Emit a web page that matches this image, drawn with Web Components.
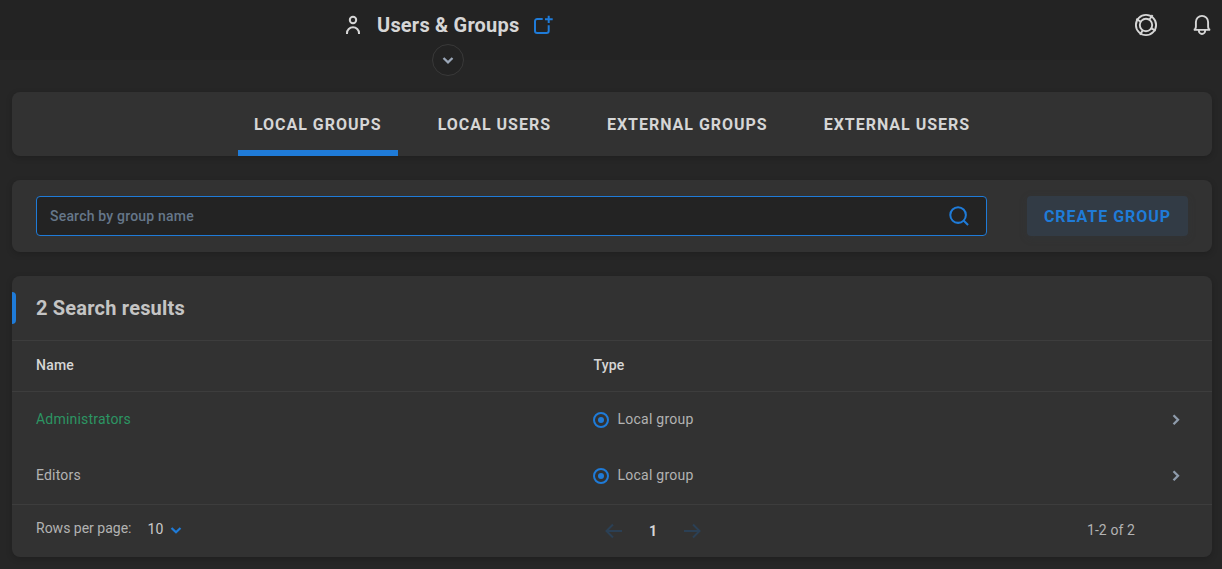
<!DOCTYPE html>
<html lang="en">
<head>
<meta charset="utf-8">
<title>Users &amp; Groups</title>
<style>
  html {
    height: 100%;
    background: #262626;
  }
  body {
    margin: 0;
    height: 100%;
    overflow: hidden;
    font-family: Roboto, "Liberation Sans", sans-serif;
    font-size: 14px;
    line-height: 20px;
    color: #b3b3b3;
    --primary: #1f7bd8;
    --surface: #323232;
    --line: #3d3d3d;
    --muted: #8e9bab;
    --bright: #d6d6d6;
  }
</style>
</head>
<body>
<users-page></users-page>

<script>
const icons = {
  user: '<circle cx="12" cy="7" r="3.2"/><path d="M6 21v-.7a6 6 0 0 1 12 0v.7"/>',
  add: '<path d="M11.700 6H6.200A2.200 2.200 0 0 0 4 8.200v9.600A2.200 2.200 0 0 0 6.200 20h9.300a2.200 2.200 0 0 0 2.200-2.200V12.300M17.700 2.700v7.300M14 6.300h7.700"/>',
  help: '<circle cx="12" cy="12" r="10.100"/><circle cx="12" cy="12" r="6.200"/><path d="M6.700 8.700L2.300 5.900M15.300 6.700l3.300-4.600M17.300 15.300l4.400 2.400M8.700 17.300l-2.600 4.500"/>',
  bell: '<path d="M3.900 16.900c1.500-.5 2-1.700 2-3.400V9a6.100 6.100 0 0 1 12.200 0v4.500c0 1.700.5 2.900 2 3.400zM8.800 17.500a3.200 3.500 0 0 0 6.400 0"/>',
  search: '<circle cx="11" cy="11" r="8.500"/><path d="M16.900 16.900l5 5"/>',
  down: '<path d="M7.500 10l4.500 4.300 4.500-4.300"/>',
  right: '<path d="M9.500 7.200l4.500 4.500-4.500 4.500"/>',
  local: '<circle cx="12" cy="12" r="10.500"/><circle cx="12" cy="12" r="4.500" fill="currentColor" stroke="none"/>',
  prev: '<path d="M20 12H4.500M11 5.500L4.500 12l6.500 6.500"/>',
  next: '<path d="M4 12h15.500M13 5.500l6.500 6.500-6.500 6.500"/>'
};

class UiIcon extends HTMLElement {
  connectedCallback() {
    const size = this.getAttribute('size') || 24;
    const weight = this.getAttribute('weight') || 2;
    this.attachShadow({ mode: 'open' }).innerHTML = `
      <style>
        :host { display: block; flex: none; width: ${size}px; height: ${size}px; }
        svg { display: block; fill: none; stroke: currentColor; }
      </style>
      <svg width="${size}" height="${size}" viewBox="0 0 24 24" stroke-width="${weight}">${icons[this.getAttribute('name')]}</svg>
    `;
  }
}
customElements.define('ui-icon', UiIcon);

// Attaches a fresh copy of the template to the host
function render(host, template) {
  host.attachShadow({ mode: 'open' }).appendChild(template.content.cloneNode(true));
}

const templateHeader = document.createElement('template');
templateHeader.innerHTML = `
  <style>
    :host {
      display: block;
      position: relative;
      height: 60px;
      box-sizing: border-box;
      background: #232323;
      color: var(--bright);
    }
    .bar {
      display: flex;
      align-items: center;
      height: 50px;
    }
    .title {
      display: flex;
      align-items: center;
      padding-left: 341px;
    }
    h1 {
      margin: 0 12px;
      font-size: 20px;
      line-height: 24px;
      font-weight: 700;
      letter-spacing: .2px;
      white-space: nowrap;
    }
    .add {
      color: var(--primary);
    }
    .actions {
      display: flex;
      gap: 32px;
      margin-left: auto;
      padding-right: 8px;
    }
    .expand {
      position: absolute;
      left: 432px;
      top: 44px;
      display: flex;
      align-items: center;
      justify-content: center;
      width: 32px;
      height: 32px;
      box-sizing: border-box;
      padding: 0;
      border: 1px solid #393939;
      border-radius: 50%;
      background: #232323;
      color: #9ba7b8;
    }
  </style>
  <div class="bar">
    <div class="title">
      <ui-icon name="user"></ui-icon>
      <h1>Users &amp; Groups</h1>
      <ui-icon class="add" name="add"></ui-icon>
    </div>
    <div class="actions">
      <ui-icon name="help" weight="1.9"></ui-icon>
      <ui-icon name="bell" weight="1.9"></ui-icon>
    </div>
  </div>
  <button class="expand"><ui-icon name="down" weight="2.3"></ui-icon></button>
`;

class PageHeader extends HTMLElement {
  constructor() {
    super();
    render(this, templateHeader);
  }
}
customElements.define('page-header', PageHeader);

const templateCard = document.createElement('template');
templateCard.innerHTML = `
  <style>
    :host {
      display: block;
      border-radius: 8px;
      background: var(--surface);
      box-shadow: 0 2px 6px rgba(0, 0, 0, .18);
    }
  </style>
  <slot></slot>
`;

class UiCard extends HTMLElement {
  constructor() {
    super();
    render(this, templateCard);
  }
}
customElements.define('ui-card', UiCard);

const templateTab = document.createElement('template');
templateTab.innerHTML = `
  <style>
    :host {
      display: flex;
      align-items: center;
      box-sizing: border-box;
      height: 64px;
      padding: 8px 16px 0;
      border-bottom: 6px solid transparent;
      color: var(--bright);
      font-size: 16px;
      font-weight: 700;
      letter-spacing: .98px;
      white-space: nowrap;
    }
    :host([active]) {
      border-color: var(--primary);
    }
  </style>
  <slot></slot>
`;

class UiTab extends HTMLElement {
  constructor() {
    super();
    render(this, templateTab);
  }
}
customElements.define('ui-tab', UiTab);

const templateSearch = document.createElement('template');
templateSearch.innerHTML = `
  <style>
    :host {
      display: flex;
      gap: 40px;
      padding: 16px 24px;
    }
    .field {
      display: flex;
      flex: 1;
      align-items: center;
      box-sizing: border-box;
      height: 40px;
      padding: 0 16px 0 13px;
      border: 1px solid var(--primary);
      border-radius: 4px;
      background: #232323;
      color: var(--primary);
    }
    .placeholder {
      flex: 1;
      color: #66778a;
      font-weight: 500;
      letter-spacing: .2px;
    }
    button {
      width: 161px;
      height: 40px;
      padding: 2px 0 0;
      border: 0;
      border-radius: 4px;
      background: #323b45;
      box-shadow: 0 2px 8px rgba(50, 59, 69, .2);
      color: var(--primary);
      font: 700 16px/20px Roboto, sans-serif;
      letter-spacing: .98px;
      white-space: nowrap;
    }
  </style>
  <div class="field">
    <span class="placeholder">Search by group name</span>
    <ui-icon name="search" size="22" weight="2.2"></ui-icon>
  </div>
  <button>CREATE GROUP</button>
`;

class GroupSearch extends HTMLElement {
  constructor() {
    super();
    render(this, templateSearch);
  }
}
customElements.define('group-search', GroupSearch);

const templateRow = document.createElement('template');
templateRow.innerHTML = `
  <style>
    :host {
      display: grid;
      grid-template-columns: 557px 1fr 24px;
      align-items: center;
      box-sizing: border-box;
      height: 56px;
      padding: 0 24px 2px;
      letter-spacing: .2px;
    }
    :host([highlighted]) .name {
      color: #2c9563;
    }
    .type {
      display: flex;
      align-items: center;
      gap: 8.5px;
      letter-spacing: .25px;
    }
    .type ui-icon {
      margin-top: 2px;
      color: var(--primary);
    }
    .open {
      margin-top: 2px;
      color: var(--muted);
    }
  </style>
  <span class="name"><slot></slot></span>
  <span class="type"><ui-icon name="local" size="16" weight="3"></ui-icon><span class="label"></span></span>
  <ui-icon class="open" name="right" weight="2.3"></ui-icon>
`;

class GroupRow extends HTMLElement {
  constructor() {
    super();
    render(this, templateRow);
  }

  connectedCallback() {
    this.shadowRoot.querySelector('.label').textContent = this.getAttribute('type');
  }
}
customElements.define('group-row', GroupRow);

const templateResults = document.createElement('template');
templateResults.innerHTML = `
  <style>
    :host {
      display: block;
    }
    .heading {
      display: flex;
      align-items: center;
      height: 64px;
      border-bottom: 1px solid var(--line);
    }
    .heading::before {
      content: '';
      width: 4px;
      height: 32px;
      border-radius: 0 4px 4px 0;
      background: var(--primary);
    }
    h2 {
      margin: 0 0 0 20px;
      color: #c4c4c4;
      font-size: 20px;
      line-height: 24px;
      font-weight: 700;
      letter-spacing: .2px;
    }
    .columns {
      display: grid;
      grid-template-columns: 557.5px 1fr;
      align-items: center;
      box-sizing: border-box;
      height: 51px;
      padding: 0 24px 2px;
      border-bottom: 1px solid var(--line);
      color: var(--bright);
      font-weight: 500;
      letter-spacing: .2px;
    }
    .footer {
      display: grid;
      grid-template-columns: 566px auto 1fr;
      height: 52px;
      padding: 0 77px 0 24px;
      border-top: 1px solid var(--line);
    }
    .rows, .pages {
      display: flex;
      align-items: center;
    }
    .rows {
      padding-bottom: 6px;
    }
    .rows b {
      margin: 1px 0 0 16px;
      color: #cacaca;
      font-weight: 400;
      letter-spacing: .25px;
    }
    .rows ui-icon {
      margin-top: 3px;
      color: var(--primary);
    }
    .pages {
      gap: 23px;
      color: #2b4055;
    }
    .pages b {
      color: var(--bright);
      font-weight: 700;
    }
    .range {
      align-self: center;
      justify-self: end;
      margin-top: -2px;
      letter-spacing: .1px;
    }
  </style>
  <div class="heading"><h2>2 Search results</h2></div>
  <div class="columns"><span>Name</span><span>Type</span></div>
  <slot></slot>
  <div class="footer">
    <div class="rows"><span>Rows per page:</span><b>10</b><ui-icon name="down" weight="2.2"></ui-icon></div>
    <div class="pages"><ui-icon name="prev"></ui-icon><b>1</b><ui-icon name="next"></ui-icon></div>
    <span class="range">1-2 of 2</span>
  </div>
`;

class SearchResults extends HTMLElement {
  constructor() {
    super();
    render(this, templateResults);
  }
}
customElements.define('search-results', SearchResults);

const templatePage = document.createElement('template');
templatePage.innerHTML = `
  <style>
    :host {
      display: block;
    }
    main {
      display: flex;
      flex-direction: column;
      gap: 24px;
      padding: 32px 10px 12px 12px;
    }
    nav {
      display: flex;
      justify-content: center;
      gap: 24px;
    }
  </style>
  <page-header></page-header>
  <main>
    <ui-card>
      <nav>
        <ui-tab active>LOCAL GROUPS</ui-tab>
        <ui-tab>LOCAL USERS</ui-tab>
        <ui-tab>EXTERNAL GROUPS</ui-tab>
        <ui-tab>EXTERNAL USERS</ui-tab>
      </nav>
    </ui-card>
    <ui-card><group-search></group-search></ui-card>
    <ui-card>
      <search-results>
        <group-row type="Local group" highlighted>Administrators</group-row>
        <group-row type="Local group">Editors</group-row>
      </search-results>
    </ui-card>
  </main>
`;

class UsersPage extends HTMLElement {
  constructor() {
    super();
    render(this, templatePage);
  }
}
customElements.define('users-page', UsersPage);
</script>
</body>
</html>
